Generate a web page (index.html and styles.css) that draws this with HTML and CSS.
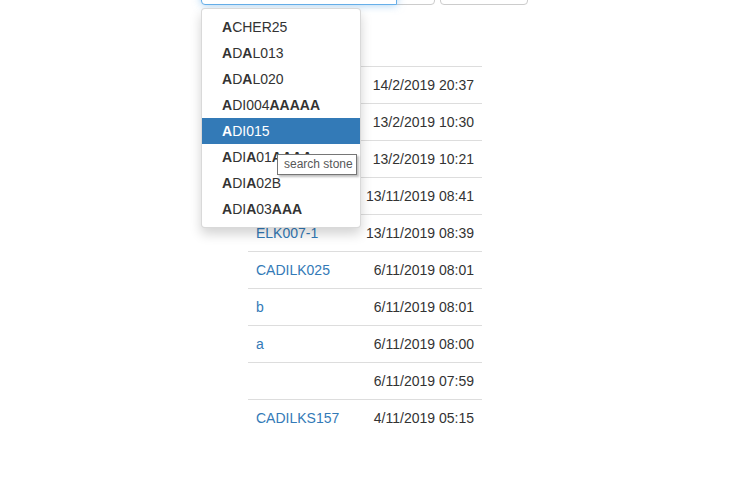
FILE: index.html
```html
<!DOCTYPE html>
<html>
<head>
<meta charset="utf-8">
<link rel="stylesheet" href="styles.css">
</head>
<body>
<div class="page">
  <div class="search-row">
    <div class="search-wrap">
      <input class="search-input" type="text" value="A">
      <ul class="typeahead">
        <li><b>A</b>CHER25</li>
        <li><b>A</b>D<b>A</b>L013</li>
        <li><b>A</b>D<b>A</b>L020</li>
        <li><b>A</b>DI004<b>AAAAA</b></li>
        <li class="active"><b>A</b>DI015</li>
        <li><b>A</b>DI<b>A</b>01<b>AAAA</b></li>
        <li><b>A</b>DI<b>A</b>02B</li>
        <li><b>A</b>DI<b>A</b>03<b>AAA</b></li>
      </ul>
      <div class="tooltip">search stone</div>
    </div>
    <span class="addon"></span>
    <span class="btn-box"></span>
  </div>
  <table class="results">
    <tbody>
      <tr><td class="name"></td><td class="date">14/2/2019 20:37</td></tr>
      <tr><td class="name"></td><td class="date">13/2/2019 10:30</td></tr>
      <tr><td class="name"></td><td class="date">13/2/2019 10:21</td></tr>
      <tr><td class="name"></td><td class="date">13/11/2019 08:41</td></tr>
      <tr><td class="name"><a href="#">ELK007-1</a></td><td class="date">13/11/2019 08:39</td></tr>
      <tr><td class="name"><a href="#">CADILK025</a></td><td class="date">6/11/2019 08:01</td></tr>
      <tr><td class="name"><a href="#">b</a></td><td class="date">6/11/2019 08:01</td></tr>
      <tr><td class="name"><a href="#">a</a></td><td class="date">6/11/2019 08:00</td></tr>
      <tr><td class="name"></td><td class="date">6/11/2019 07:59</td></tr>
      <tr><td class="name"><a href="#">CADILKS157</a></td><td class="date">4/11/2019 05:15</td></tr>
    </tbody>
  </table>
</div>
</body>
</html>
```
FILE: styles.css
```css
html, body {
  margin: 0;
  padding: 0;
  background: #fff;
  font-family: "Liberation Sans", Arial, sans-serif;
  font-size: 14px;
  line-height: 20px;
  color: #333;
  overflow: hidden;
}

.page {
  padding-left: 201px;
}

.search-row {
  display: flex;
  align-items: flex-start;
  margin-top: -29px;
  height: 34px;
}

.search-wrap {
  position: relative;
  width: 196px;
  height: 34px;
}

.search-input {
  box-sizing: border-box;
  width: 196px;
  height: 34px;
  padding: 6px 12px;
  border: 1px solid #66afe9;
  border-radius: 4px 0 0 4px;
  outline: 0;
  box-shadow: inset 0 1px 1px rgba(0,0,0,.075), 0 0 8px rgba(102,175,233,.6);
  font: 14px "Liberation Sans", Arial, sans-serif;
  color: #555;
  position: relative;
  z-index: 2;
}

.addon {
  box-sizing: border-box;
  display: block;
  width: 39px;
  height: 34px;
  margin-left: -1px;
  border: 1px solid #ccc;
  border-radius: 0 4px 4px 0;
  background: #fff;
}

.btn-box {
  box-sizing: border-box;
  display: block;
  width: 88px;
  height: 34px;
  margin-left: 5px;
  border: 1px solid #ccc;
  border-radius: 4px;
  background: #fff;
}

.typeahead {
  position: absolute;
  top: 37px;
  left: 0;
  z-index: 10;
  box-sizing: border-box;
  width: 160px;
  margin: 0;
  padding: 5px 0;
  list-style: none;
  background: #fff;
  border: 1px solid rgba(0,0,0,.15);
  border-radius: 4px;
  box-shadow: 0 6px 12px rgba(0,0,0,.175);
}

.typeahead li {
  padding: 3px 20px;
  line-height: 20px;
  color: #333;
  white-space: nowrap;
}

.typeahead li b {
  font-weight: bold;
}

.typeahead li.active {
  background: #337ab7;
  color: #fff;
}

.tooltip {
  position: absolute;
  top: 183px;
  left: 76px;
  z-index: 20;
  box-sizing: border-box;
  width: 80px;
  height: 21px;
  padding: 0 0 0 6px;
  background: #fff;
  border: 1px solid #767676;
  box-shadow: 2px 2px 2px rgba(0,0,0,.25);
  font-family: "Liberation Sans", Arial, sans-serif;
  font-size: 12px;
  line-height: 19px;
  color: #575757;
  white-space: nowrap;
}

.results {
  margin-top: 61px;
  margin-left: 47px;
  width: 234px;
  border-collapse: collapse;
  border-spacing: 0;
}

.results td {
  padding: 8px;
  line-height: 20px;
  border-top: 1px solid #ddd;
  vertical-align: top;
}

.results td.name {
  width: 95px;
}

.results td.date {
  text-align: right;
  white-space: nowrap;
}

.results a {
  color: #337ab7;
  text-decoration: none;
}
```
